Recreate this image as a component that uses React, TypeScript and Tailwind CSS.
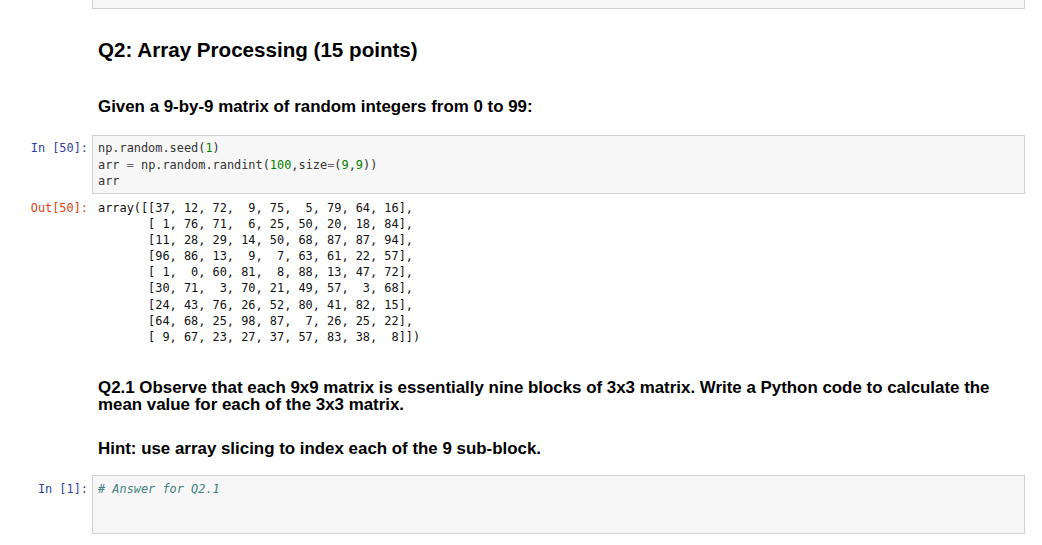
import React from "react";

const mono = "font-['DejaVu_Sans_Mono','Liberation_Mono',monospace] text-[11.9px]";
const sans = "font-['Liberation_Sans',Arial,sans-serif]";

const rows = [
  "array([[37, 12, 72,  9, 75,  5, 79, 64, 16],",
  "       [ 1, 76, 71,  6, 25, 50, 20, 18, 84],",
  "       [11, 28, 29, 14, 50, 68, 87, 87, 94],",
  "       [96, 86, 13,  9,  7, 63, 61, 22, 57],",
  "       [ 1,  0, 60, 81,  8, 88, 13, 47, 72],",
  "       [30, 71,  3, 70, 21, 49, 57,  3, 68],",
  "       [24, 43, 76, 26, 52, 80, 41, 82, 15],",
  "       [64, 68, 25, 98, 87,  7, 26, 25, 22],",
  "       [ 9, 67, 23, 27, 37, 57, 83, 38,  8]])",
];

function Num({ children }: { children: React.ReactNode }) {
  return <span className="text-[#008000]">{children}</span>;
}
function Op({ children }: { children: React.ReactNode }) {
  return <span className="text-[#666666]">{children}</span>;
}

export default function App() {
  return (
    <div className={`h-[545px] w-[1042px] overflow-hidden bg-white text-black ${sans}`}>
      {/* previous cell bottom */}
      <div className="ml-[92px] h-[9px] w-[933px] border-x border-b border-[#cfcfcf] bg-[#f7f7f7]" />

      {/* markdown: title */}
      <div className="pl-[98px] pt-[29px]">
        <h2 className="text-[20.6px] font-bold leading-[24px]">Q2: Array Processing (15 points)</h2>
        <p className="mt-[35px] text-[16.9px] font-bold leading-[20px]">
          Given a 9-by-9 matrix of random integers from 0 to 99:
        </p>
      </div>

      {/* code cell */}
      <div className="mt-[18px] flex">
        <div className={`w-[92px] shrink-0 pr-[4px] pt-[5px] text-right leading-[16.5px] text-[#303f9f] ${mono}`}>
          In&nbsp;[50]:
        </div>
        <div className={`h-[59px] w-[933px] border border-[#cfcfcf] bg-[#f7f7f7] px-[5px] pt-[4px] leading-[16.5px] whitespace-pre text-[#333333] ${mono}`}>
          <div>
            np.random.seed(<Num>1</Num>)
          </div>
          <div>
            arr <Op>=</Op> np.random.randint(<Num>100</Num>,size<Op>=</Op>(<Num>9</Num>,<Num>9</Num>))
          </div>
          <div>arr</div>
        </div>
      </div>

      {/* output */}
      <div className="mt-[6px] flex">
        <div className={`w-[92px] shrink-0 pr-[4px] text-right leading-[16.1px] text-[#d84315] ${mono}`}>
          Out[50]:
        </div>
        <div className={`pl-[6px] leading-[16.1px] whitespace-pre text-[#111111] ${mono}`}>
          {rows.map((r, i) => (
            <div key={i}>{r}</div>
          ))}
        </div>
      </div>

      {/* markdown Q2.1 */}
      <div className="pl-[98px] pr-[40px] pt-[34px] text-[16.9px] font-bold leading-[17px]">
        <p>
          Q2.1 Observe that each 9x9 matrix is essentially nine blocks of 3x3 matrix. Write a Python code to calculate the
          mean value for each of the 3x3 matrix.
        </p>
        <p className="mt-[27px]">Hint: use array slicing to index each of the 9 sub-block.</p>
      </div>

      {/* answer cell */}
      <div className="mt-[18px] flex">
        <div className={`w-[92px] shrink-0 pr-[4px] pt-[6px] text-right leading-[16.5px] text-[#303f9f] ${mono}`}>
          In&nbsp;[1]:
        </div>
        <div className={`h-[59px] w-[933px] border border-[#cfcfcf] bg-[#f7f7f7] px-[5px] pt-[5px] leading-[16.5px] ${mono}`}>
          <span className="italic text-[#408080]"># Answer for Q2.1</span>
        </div>
      </div>
    </div>
  );
}
